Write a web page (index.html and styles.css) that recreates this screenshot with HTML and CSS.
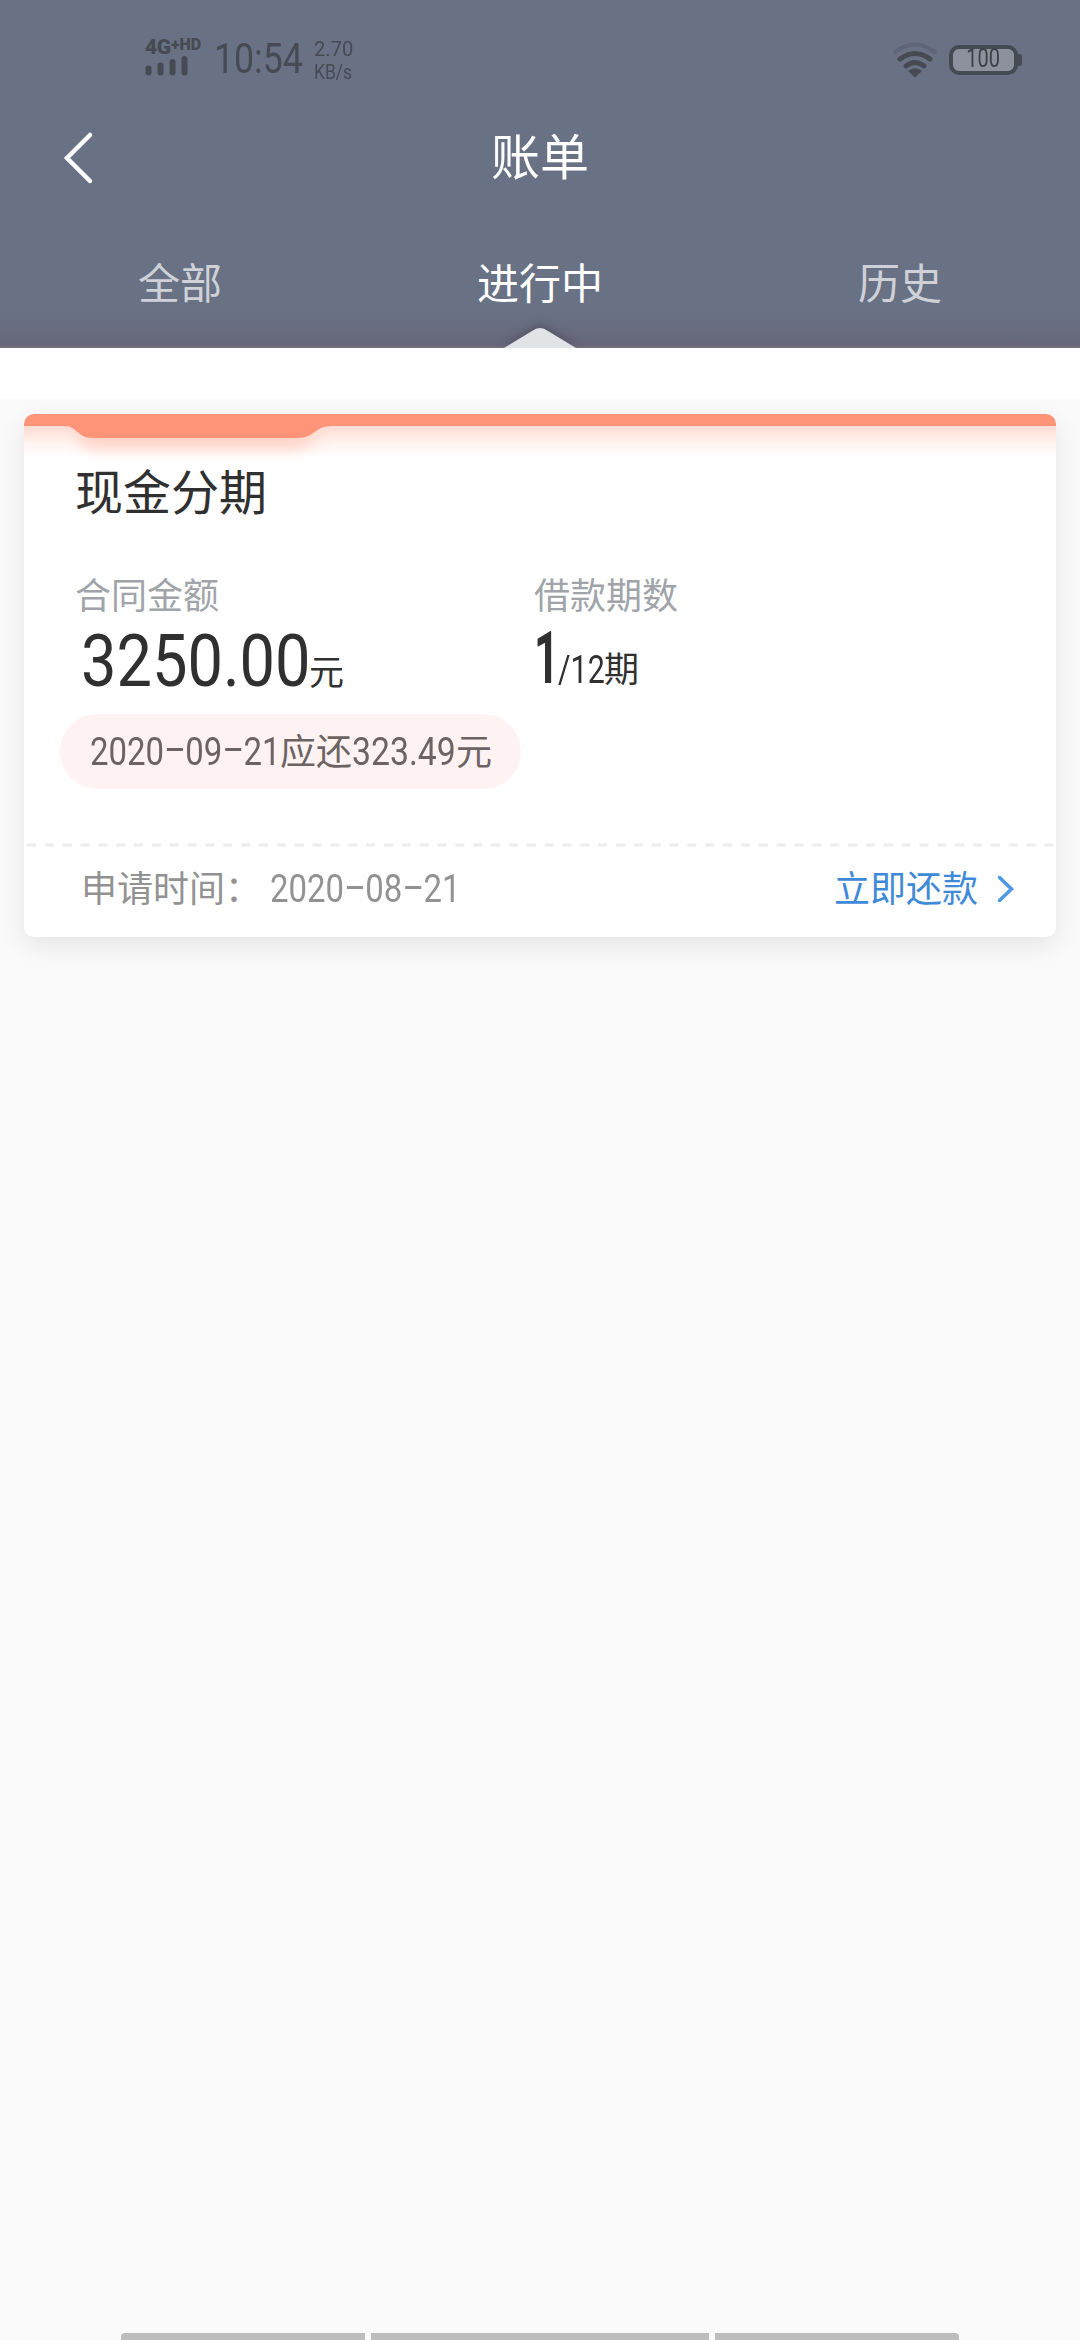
FILE: index.html
```html
<!DOCTYPE html>
<html lang="zh-CN">
<head>
<meta charset="utf-8">
<title>账单</title>
<link rel="stylesheet" href="styles.css">
</head>
<body>
<div class="screen">
  <header class="header">
    <div class="status">
      <div class="network">
        <div class="net-type"><b>4G</b><sup>+HD</sup></div>
        <svg class="bars" width="44" height="20" viewBox="0 0 44 20"><path d="M3.500 12.500V16.500M15.500 9.500V16.500M27.500 6V16.500M39.500 3V16.500"/></svg>
      </div>
      <div class="clock"><span class="num">10:54</span></div>
      <div class="speed"><span class="num rate">2.70</span><span class="num">KB/s</span></div>
      <svg class="wifi" width="46" height="36" viewBox="0 0 46 36">
        <path class="faint" d="M3 10Q23-5 43 10"/>
        <path class="wave" d="M8 17Q23 6 38 17M14 24Q23 17 32 24"/>
        <path class="dot" d="M16 29Q23 23.500 30 29L23 35.500Z"/>
      </svg>
      <div class="battery"><div class="cell"><span class="num">100</span></div><i class="nub"></i></div>
    </div>
    <div class="titlebar">
      <svg class="back" width="32" height="54" viewBox="0 0 32 54"><path d="M28 4L5 27L28 50"/></svg>
      <h1>账单</h1>
    </div>
    <nav class="tabs">
      <span>全部</span>
      <span class="active">进行中<svg class="pointer" width="72" height="20" viewBox="0 0 72 20"><path d="M0 20L28 3Q36-3 44 3L72 20Z"/></svg></span>
      <span>历史</span>
    </nav>
  </header>
  <div class="strip"></div>
  <main class="content">
    <section class="card">
      <svg class="ribbon" width="1032" height="60" viewBox="0 0 1032 60">
        <defs>
          <linearGradient id="glow" x1="0" y1="0" x2="0" y2="1">
            <stop offset="0" stop-color="#ff9478" stop-opacity=".34"/>
            <stop offset=".55" stop-color="#ff9478" stop-opacity=".1"/>
            <stop offset="1" stop-color="#ff9478" stop-opacity="0"/>
          </linearGradient>
          <filter id="soft" x="-10%" y="-50%" width="120%" height="250%"><feGaussianBlur stdDeviation="7"/></filter>
        </defs>
        <rect y="12" width="1032" height="32" fill="url(#glow)"/>
        <path d="M46 12C54 13 58 24 74 24H268C286 24 290 13 304 12Z" transform="translate(0 10)" fill="#ff9478" opacity=".45" filter="url(#soft)"/>
        <path d="M0 0H1032V12H308C290 12 292 24 272 24H70C52 24 54 12 40 12H0Z" fill="#ff9478"/>
      </svg>
      <div class="summary">
        <h2>现金分期</h2>
        <div class="facts">
          <div class="fact">
            <div class="label">合同金额</div>
            <div class="value"><span class="num amount">3250.00</span><span class="unit">元</span></div>
          </div>
          <div class="fact">
            <div class="label">借款期数</div>
            <div class="value term"><span class="num current">1</span><span class="num total">/12</span><span class="unit">期</span></div>
          </div>
        </div>
        <div class="due"><span class="num due-date">2020<i class="dash"></i>09<i class="dash"></i>21</span><span class="han">应还</span><span class="num due-sum">323.49</span><span class="han">元</span></div>
      </div>
      <svg class="divider" width="1032" height="4" viewBox="0 0 1032 4"><path d="M3 2H1029"/></svg>
      <footer class="card-foot">
        <span class="han applied">申请时间：</span>
        <span class="num applied-date">2020<i class="dash"></i>08<i class="dash"></i>21</span>
        <a class="han repay">立即还款</a>
        <svg class="go" width="18" height="28" viewBox="0 0 18 28"><path d="M2.500 2.500L14.500 14L2.500 25.500"/></svg>
      </footer>
    </section>
  </main>
  <div class="gesture"><i></i><i></i><i></i></div>
</div>
</body>
</html>
```
FILE: styles.css
```css
* { box-sizing: border-box; }
body { margin: 0; font-family: Roboto, "Noto Sans CJK SC", sans-serif; }
h1, h2 { margin: 0; font-weight: 400; }
.screen { width: 1080px; height: 2340px; display: flex; flex-direction: column; background: #fafafa; overflow: hidden; }
.num { display: inline-block; transform-origin: left center; transform: scaleX(.865); white-space: nowrap; }

.header { height: 348px; background: linear-gradient(#697184 0, #697184 308px, #686c7e 334px, #666579 345px, #77757d 348px); color: #fff; }
.status { height: 106px; padding: 39px 59px 0 145px; display: flex; align-items: flex-start; color: #464a52; }
.network { width: 69px; }
.net-type { display: flex; height: 17px; line-height: 17px; font-size: 21px; }
.net-type b { font-weight: 900; width: 26px; letter-spacing: -.5px; }
.net-type sup { font-size: 16px; font-weight: 900; line-height: 11px; vertical-align: top; }
.bars { display: block; }
.bars path { stroke: #464a52; stroke-width: 6; stroke-linecap: round; }
.clock { width: 100px; height: 40px; line-height: 39px; font-size: 43px; font-weight: 400; }
.clock .num { transform: scaleX(.83); }
.speed { flex: 1; display: flex; flex-direction: column; align-items: flex-start; font-size: 21px; line-height: 23px; margin-top: -1px; }
.speed .num { transform: scaleX(.83); }
.speed .rate { transform: scaleX(.96); }
.wifi { margin: 3px 11px 0 0; fill: none; stroke-linecap: round; overflow: visible; }
.faint { stroke: #5f6579; stroke-width: 4; }
.wave { stroke: #464a52; stroke-width: 5; }
.dot { fill: #464a52; }
.battery { display: flex; align-items: center; margin: 6px -1px 0 0; }
.cell { width: 69px; height: 30px; border: 4px solid #464a52; border-radius: 10px; background: #8c919d; font-size: 25px; line-height: 19px; text-align: center; color: #3c4047; }
.cell .num { transform-origin: center; transform: scaleX(.8); }
.nub { width: 4px; height: 12px; background: #464a52; border-radius: 0 3px 3px 0; }

.titlebar { height: 102px; display: grid; grid-template-columns: 480px 120px 480px; align-items: center; }
.back { margin: 2px 0 0 62px; }
.back path { fill: none; stroke: #fff; stroke-width: 4.500; stroke-linecap: round; }
h1 { font-size: 49px; line-height: 70px; text-align: center; padding-top: 3px; }
.tabs { height: 140px; display: grid; grid-template-columns: repeat(3, 1fr); font-size: 42px; line-height: 126px; padding-top: 14px; text-align: center; color: #ced1d7; }
.tabs .active { color: #fff; position: relative; }
.pointer { position: absolute; left: 144px; bottom: 0; fill: #e1e3e7; filter: drop-shadow(0 -3px 5px rgba(60,55,70,.45)); clip-path: inset(-20px -20px 0 -20px); }
.strip { height: 51px; background: #fff; position: relative; }

.content { flex: 1; padding: 15px 24px 0 24px; }
.card { height: 523px; background: #fff; border-radius: 10px; box-shadow: 0 8px 26px rgba(0,0,0,.09); display: flex; flex-direction: column; }
.ribbon { display: block; height: 60px; margin-bottom: -20px; border-radius: 10px 10px 0 0; }
.summary { height: 389px; padding: 0 36px 0 51px; }
h2 { height: 79px; padding-top: 2px; line-height: 76px; font-size: 48px; color: #303030; }
.facts { display: grid; grid-template-columns: 459px 1fr; padding-top: 28px; }
.label { height: 72px; line-height: 72px; font-size: 36px; color: #a0a4a9; }
.value { display: flex; align-items: baseline; height: 78px; line-height: 78px; margin-top: -11px; padding-left: 6px; color: #303030; }
.amount { font-size: 73px; width: 228px; }
.unit { font-size: 35px; position: relative; top: -1px; }
.term { padding-left: 0; margin-top: -14px; }
.current { font-size: 73px; font-weight: 700; width: 24px; }
.num.current { transform: scaleX(.6); }
.total { font-size: 39px; width: 46px; }
.num.total { transform: scaleX(.78); }
.due { display: flex; align-items: center; width: 461px; height: 75px; margin: 14px 0 0 -15px; padding-left: 30px; border-radius: 38px; background: #fef3f2; color: #6c6462; font-size: 36px; }
.due .num { font-size: 39px; }
.dash { display: inline-block; width: 19px; height: 3px; margin: 0 3px; background: currentColor; vertical-align: .34em; }
.han { position: relative; top: -3px; }
.due-date { width: 190px; }
.due .num.due-date, .num.applied-date { transform: scaleX(.845); }
.due-sum { width: 104px; }
.divider { display: block; }
.divider path { stroke: #ececec; stroke-width: 3; stroke-dasharray: 9 8.850; }
.card-foot { flex: 1; display: flex; align-items: center; padding: 0 41px 6px 57px; font-size: 36px; color: #929292; }
.applied { width: 189px; }
.applied-date { flex: 1; font-size: 39px; }
.repay { width: 163px; flex: none; color: #3f8ad8; }
.go path { fill: none; stroke: #4d98e4; stroke-width: 3.500; stroke-linecap: round; }

.gesture { height: 7px; display: grid; grid-template-columns: 244px 338px 244px; gap: 6px; justify-content: center; }
.gesture i { background: #bdbdbd; }
.gesture i:first-child { border-radius: 4px 0 0 0; }
.gesture i:last-child { border-radius: 0 4px 0 0; }
```
